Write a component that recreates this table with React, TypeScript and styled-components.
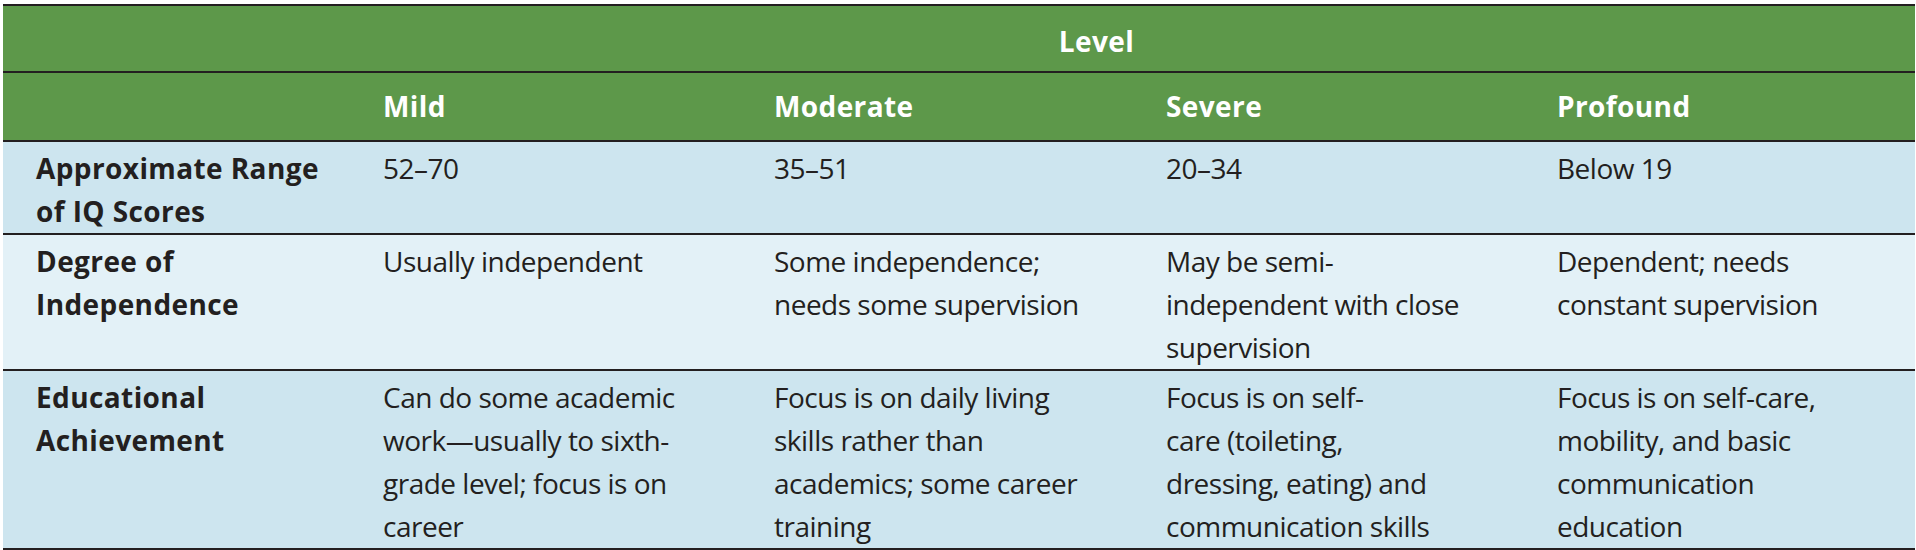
import React from "react"
import styled, { createGlobalStyle } from "styled-components"

const GlobalStyle = createGlobalStyle`
  html, body {
    margin: 0;
    padding: 0;
    background: #ffffff;
  }
  body {
    font-family: "Open Sans", "Noto Sans", "Liberation Sans", sans-serif;
    color: #231f20;
  }
`

const LEVELS = ["Mild", "Moderate", "Severe", "Profound"]

const ROWS: { label: string[]; cells: string[][]; tone: "dark" | "light" }[] = [
  {
    label: ["Approximate Range", "of IQ Scores"],
    cells: [["52–70"], ["35–51"], ["20–34"], ["Below 19"]],
    tone: "dark",
  },
  {
    label: ["Degree of", "Independence"],
    cells: [
      ["Usually independent"],
      ["Some independence;", "needs some supervision"],
      ["May be semi-", "independent with close", "supervision"],
      ["Dependent; needs", "constant supervision"],
    ],
    tone: "light",
  },
  {
    label: ["Educational", "Achievement"],
    cells: [
      ["Can do some academic", "work—usually to sixth-", "grade level; focus is on", "career"],
      ["Focus is on daily living", "skills rather than", "academics; some career", "training"],
      ["Focus is on self-", "care (toileting,", "dressing, eating) and", "communication skills"],
      ["Focus is on self-care,", "mobility, and basic", "communication", "education"],
    ],
    tone: "dark",
  },
]

const COL_WIDTHS = [347, 391, 392, 391, 391]

export default function App() {
  return (
    <>
      <GlobalStyle />
      <Page>
        <Table>
          <colgroup>
            {COL_WIDTHS.map((w, i) => (
              <col key={i} style={{ width: w }} />
            ))}
          </colgroup>
          <thead>
            <HeadRow $height={67}>
              <HeadCell />
              <SpanCell colSpan={4}>Level</SpanCell>
            </HeadRow>
            <HeadRow $height={69}>
              <HeadCell />
              {LEVELS.map((l) => (
                <HeadCell key={l}>{l}</HeadCell>
              ))}
            </HeadRow>
          </thead>
          <tbody>
            {ROWS.map((row) => (
              <BodyRow key={row.label.join(" ")} $tone={row.tone}>
                <Cell $bold>
                  {row.label.map((line) => (
                    <Line key={line}>{line}</Line>
                  ))}
                </Cell>
                {row.cells.map((lines, i) => (
                  <Cell key={i}>
                    {lines.map((line) => (
                      <Line key={line}>{line}</Line>
                    ))}
                  </Cell>
                ))}
              </BodyRow>
            ))}
          </tbody>
        </Table>
      </Page>
    </>
  )
}

const Page = styled.div`
  padding: 4px 1px 0 3px;
`

const Table = styled.table`
  width: 1912px;
  table-layout: fixed;
  border-collapse: collapse;
  font-size: 28px;
  line-height: 43px;
`

const HeadRow = styled.tr<{ $height: number }>`
  height: ${(p) => p.$height}px;
  background: #5d984a;
  border-top: 2px solid #231f20;
  border-bottom: 2px solid #231f20;
`

const HeadCell = styled.th`
  padding: 0 0 0 33px;
  text-align: left;
  vertical-align: middle;
  color: #ffffff;
  font-weight: 700;
  letter-spacing: 0.4px;
`

const SpanCell = styled(HeadCell)`
  padding: 6px 72px 0 0;
  text-align: center;
`

const BodyRow = styled.tr<{ $tone: "dark" | "light" }>`
  background: ${(p) => (p.$tone === "dark" ? "#cde5ef" : "#e3f1f7")};
  border-bottom: 2px solid #231f20;
`

const Cell = styled.td<{ $bold?: boolean }>`
  padding: 5px 0 0 33px;
  vertical-align: top;
  font-weight: ${(p) => (p.$bold ? 700 : 400)};
  letter-spacing: ${(p) => (p.$bold ? "0.4px" : "-0.5px")};
`

const Line = styled.div`
  white-space: nowrap;
`
